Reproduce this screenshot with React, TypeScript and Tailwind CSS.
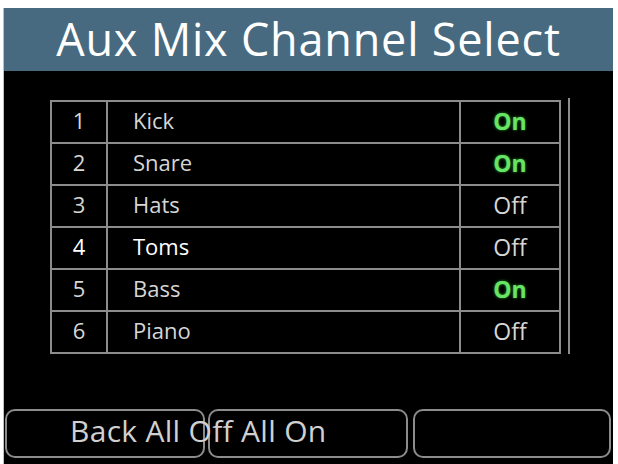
import React from "react";

const channels = [
  { num: 1, name: "Kick", on: true },
  { num: 2, name: "Snare", on: true },
  { num: 3, name: "Hats", on: false },
  { num: 4, name: "Toms", on: false, selected: true },
  { num: 5, name: "Bass", on: true },
  { num: 6, name: "Piano", on: false },
];

const App = () => {
  return (
    <div
      className="w-[618px] h-[464px] bg-white pt-2 pl-[3px] overflow-hidden"
      style={{ fontFamily: '"Open Sans", "Noto Sans", sans-serif' }}
    >
      <div className="w-[610px] h-[456px] bg-black border-l border-[#bfbfbf] flex flex-col">
        {/* title bar */}
        <div className="h-[63px] bg-[#476a80] flex items-center justify-center pb-[2px]">
          <h1 className="text-[45px] leading-none text-white tracking-[0.8px]">
            Aux Mix Channel Select
          </h1>
        </div>

        {/* channel list with scroll track */}
        <div className="flex mt-[29px] ml-[46px]">
          <div className="w-[511px] border-2 border-[#8c8c8c]">
            {channels.map((ch, i) => (
              <div
                key={ch.num}
                className={`flex ${i > 0 ? "h-[42px] border-t-2 border-[#8c8c8c]" : "h-[40px]"}`}
              >
                <div
                  className={`w-[56px] border-r-2 border-[#8c8c8c] flex items-center justify-center pb-[3px] text-[22px] ${
                    ch.selected ? "text-white" : "text-[#d6d6d6]"
                  }`}
                >
                  {ch.num}
                </div>
                <div
                  className={`w-[353px] border-r-2 border-[#8c8c8c] flex items-center pl-[25px] pb-[3px] text-[22px] ${
                    ch.selected ? "text-white" : "text-[#d6d6d6]"
                  }`}
                >
                  {ch.name}
                </div>
                <div className="flex-1 flex items-center justify-center pb-[2px] text-[23px]">
                  {ch.on ? (
                    <span
                      className="font-bold text-[#66e466]"
                      style={{ textShadow: "0 0 3px #2f9a2f" }}
                    >
                      On
                    </span>
                  ) : (
                    <span className="text-[#d6d6d6]">Off</span>
                  )}
                </div>
              </div>
            ))}
          </div>
          <div className="ml-[7px] mt-[-2px] w-[2px] h-[256px] bg-[#8c8c8c]" />
        </div>

        {/* soft keys */}
        <div className="flex gap-[3px] mt-[55px] ml-[1px]">
          <div className="w-[200px] h-[49px] border-2 border-[#8c8c8c] rounded-[10px] flex items-center pl-[63px] pb-[6px]">
            <span className="text-[30px] leading-none text-[#d0d0d0] tracking-[0.3px] whitespace-nowrap relative z-10">
              Back All Off All On
            </span>
          </div>
          <div className="w-[200px] h-[49px] border-2 border-[#8c8c8c] rounded-[10px]" />
          <div className="w-[198px] h-[49px] border-2 border-[#8c8c8c] rounded-[10px] ml-[2px]" />
        </div>
      </div>
    </div>
  );
};

export default App;
